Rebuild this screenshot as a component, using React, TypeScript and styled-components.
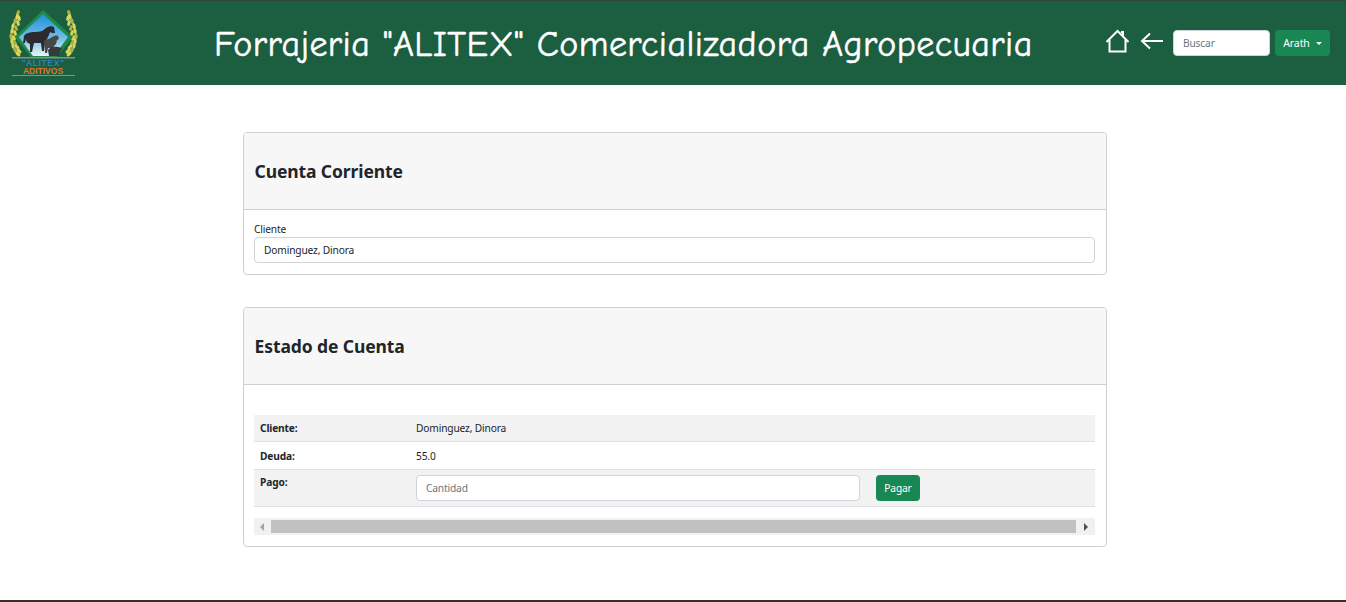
import React from 'react';
import styled, { createGlobalStyle } from 'styled-components';

const GlobalStyle = createGlobalStyle`
  html, body {
    margin: 0;
    padding: 0;
    background: #ffffff;
    overflow: hidden;
  }
  * {
    box-sizing: border-box;
  }
  body {
    font-family: "Noto Sans", "Open Sans", "Liberation Sans", sans-serif;
    color: #212529;
  }
`;

// grain positions along each wheat ear, in screen pixels
const grains = [
  [18, 13, 20], [17, 17, 10], [19, 18, -15], [15, 21, 15], [18, 23, -15], [13, 26, 15], [16, 28, -20],
  [12, 31, 10], [15, 33, -20], [11, 36, 5], [14, 38, -25], [12, 41, 0], [15, 43, -30], [13, 46, -10],
  [17, 47, -40], [15, 50, -25], [19, 51, -50], [18, 54, -45],
];

const Logo = () => (
  <LogoSvg viewBox="8 7 72 72" aria-hidden="true">
    <defs>
      <linearGradient id="sky" x1="0" y1="0" x2="0" y2="1">
        <stop offset="0" stopColor="#1f8fd8" />
        <stop offset="0.55" stopColor="#6dbbe6" />
        <stop offset="1" stopColor="#e8f4f8" />
      </linearGradient>
    </defs>
    {grains.map(([x, y, r], i) => (
      <React.Fragment key={i}>
        <ellipse cx={x} cy={y} rx="1.6" ry="3" transform={`rotate(${r} ${x} ${y})`} fill={i % 3 ? '#dcd75a' : '#a9b548'} />
        <ellipse cx={87 - x} cy={y} rx="1.6" ry="3" transform={`rotate(${-r} ${87 - x} ${y})`} fill={i % 3 ? '#dcd75a' : '#a9b548'} />
      </React.Fragment>
    ))}
    {/* diamond */}
    <path d="M43 10 L73 37 L57 57 H31 L15 37 Z" fill="#1c8a48" />
    <path d="M43 14 L68 37 L54 56 H33 L19 37 Z" fill="url(#sky)" />
    {/* horses */}
    <path d="M24 36c2 -3 6 -4 11 -4 5 0 8 -1 11 -4 3 -2 6 -2 8 -1l1 6 -3 0 -2 -1c-1 3 -2 5 -3 7l-2 4 -1 8h-2l-1 -8h-7l-2 9h-2v-8c-3 -1 -4 -3 -4 -5l-1 4h-2z" fill="#2b2b2f" />
    <path d="M44 41c3 -2 6 -2 8 -4 2 -1 5 -2 6 -1l1 3 -2 1 -1 4 -2 2v7h-2v-5h-4l-1 5h-2v-6z" fill="#46484a" />
    <path d="M48 50c2 -3 6 -4 10 -3l4 1 -2 4 -1 4h-10z" fill="#38393c" />
    {/* labels */}
    <rect x="12" y="57" width="63" height="1.5" fill="#83938a" />
    <LogoName x="43" y="65.5">"ALITEX"</LogoName>
    <LogoSub x="43" y="73.5">ADITIVOS</LogoSub>
    <rect x="12" y="75" width="63" height="1" fill="#83938a" />
  </LogoSvg>
);

const HomeIcon = () => (
  <IconSvg width="24" height="24" viewBox="0 0 24 24">
    <path d="M1.5 13 L12.5 2 L23.5 13" />
    <path d="M4.5 10.5 V22.5 H20.5 V10.5" />
    <path d="M18 7 V3 H16" />
  </IconSvg>
);

const BackIcon = () => (
  <IconSvg width="24" height="24" viewBox="0 0 24 24">
    <path d="M3 12 H24" />
    <path d="M11 4.5 L3 12 L11 19.5" />
  </IconSvg>
);

const App = () => (
  <Page>
    <GlobalStyle />
    <Navbar>
      <Brand>
        <Logo />
      </Brand>
      <Title>Forrajeria "ALITEX" Comercializadora Agropecuaria</Title>
      <NavTools>
        <HomeIcon />
        <BackIcon />
        <SearchInput placeholder="Buscar" readOnly />
        <UserButton>
          Arath
          <Caret />
        </UserButton>
      </NavTools>
    </Navbar>

    <Main>
      <Card>
        <CardHeader>
          <CardTitle>Cuenta Corriente</CardTitle>
        </CardHeader>
        <ClientBody>
          <Label>Cliente</Label>
          <TextInput value="Dominguez, Dinora" readOnly />
        </ClientBody>
      </Card>

      <Card>
        <CardHeader>
          <CardTitle>Estado de Cuenta</CardTitle>
        </CardHeader>
        <AccountBody>
          <AccountTable>
            <Row $striped $height={27}>
              <HeadCell>Cliente:</HeadCell>
              <ValueCell>Dominguez, Dinora</ValueCell>
            </Row>
            <Row $height={28}>
              <HeadCell>Deuda:</HeadCell>
              <ValueCell>55.0</ValueCell>
            </Row>
            <Row $striped $height={37} $top>
              <HeadCell $inset>Pago:</HeadCell>
              <PayCell>
                <PayInput placeholder="Cantidad" readOnly />
                <PayButton>Pagar</PayButton>
              </PayCell>
            </Row>
          </AccountTable>
          <ScrollBar>
            <ScrollArrow $left />
            <ScrollThumb />
            <ScrollArrow />
          </ScrollBar>
        </AccountBody>
      </Card>
    </Main>
    <FooterLine />
  </Page>
);

const Page = styled.div`
  width: 100%;
  height: 602px;
  display: flex;
  flex-direction: column;
`;

const Navbar = styled.header`
  height: 85px;
  flex: none;
  background-color: #1b5e40;
  border-top: 1px solid #33443c;
  display: flex;
  align-items: center;
  padding: 0 16px 0 8px;
`;

const Brand = styled.div`
  width: 72px;
  flex: none;
  display: flex;
`;

const LogoSvg = styled.svg`
  width: 72px;
  height: 72px;
`;

const LogoName = styled.text`
  font-family: "Liberation Sans", sans-serif;
  font-size: 8.5px;
  font-weight: 700;
  letter-spacing: 0.6px;
  fill: #2f7fc0;
  text-anchor: middle;
`;

const LogoSub = styled.text`
  font-family: "Liberation Sans", sans-serif;
  font-size: 8.5px;
  font-weight: 700;
  fill: #dd7a2a;
  text-anchor: middle;
`;

const Title = styled.h1`
  margin: 3px 0 0 134px;
  width: 817px;
  flex: none;
  font-family: "Comic Sans MS", "Comic Neue", "Open Sans", sans-serif;
  font-size: 36px;
  font-weight: 400;
  line-height: 1.2;
  letter-spacing: 0.44px;
  -webkit-text-stroke: 0.5px #ffffff;
  color: #ffffff;
  white-space: nowrap;
`;

const NavTools = styled.div`
  margin-left: auto;
  display: flex;
  align-items: center;
`;

const IconSvg = styled.svg`
  fill: none;
  stroke: #ffffff;
  stroke-width: 2;
  margin-right: 10px;
  margin-top: -4px;
  flex: none;
`;

const SearchInput = styled.input`
  width: 97px;
  height: 26px;
  padding: 0 9px;
  border: 1px solid #ced4da;
  border-radius: 4px;
  background: #ffffff;
  font: inherit;
  font-size: 10.2px;
  letter-spacing: -0.15px;
  outline: none;
  &::placeholder {
    color: #6c757d;
  }
`;

const UserButton = styled.button`
  margin-left: 5px;
  width: 55px;
  height: 26px;
  padding: 0;
  display: flex;
  align-items: center;
  justify-content: center;
  border: 0;
  border-radius: 4px;
  background: #198754;
  color: #ffffff;
  font: inherit;
  font-size: 10.5px;
  letter-spacing: -0.1px;
`;

const Caret = styled.span`
  margin-left: 6px;
  border-top: 3.5px solid #ffffff;
  border-left: 3.5px solid transparent;
  border-right: 3.5px solid transparent;
`;

const Main = styled.main`
  flex: 1;
  width: 864px;
  margin: 47px auto 0 243px;
  display: flex;
  flex-direction: column;
  gap: 32px;
`;

const Card = styled.section`
  border: 1px solid #cfd0d1;
  border-radius: 4px;
  background: #ffffff;
`;

const CardHeader = styled.div`
  height: 77px;
  padding: 0 11px 0 10.5px;
  display: flex;
  align-items: center;
  background: #f7f7f7;
  border-bottom: 1px solid #cfd0d1;
  border-radius: 3px 3px 0 0;
`;

const CardTitle = styled.h2`
  margin: 0;
  font-size: 17.5px;
  font-weight: 700;
  letter-spacing: -0.1px;
  color: #212529;
`;

const ClientBody = styled.div`
  padding: 12px 11px 11px 10px;
`;

const Label = styled.label`
  display: block;
  margin-bottom: 1px;
  font-size: 10.2px;
  letter-spacing: -0.15px;
  line-height: 14px;
`;

const TextInput = styled.input`
  display: block;
  width: 100%;
  height: 26px;
  padding: 0 9px;
  border: 1px solid #ced4da;
  border-radius: 4px;
  background: #ffffff;
  color: #212529;
  font: inherit;
  font-size: 10.2px;
  letter-spacing: -0.15px;
  outline: none;
`;

const AccountBody = styled.div`
  padding: 30px 11px 11px 10px;
`;

const AccountTable = styled.div`
  display: flex;
  flex-direction: column;
`;

const Row = styled.div<{ $striped?: boolean; $height: number; $top?: boolean }>`
  height: ${({ $height }) => $height}px;
  display: flex;
  align-items: ${({ $top }) => ($top ? 'flex-start' : 'center')};
  background: ${({ $striped }) => ($striped ? '#f2f2f2' : '#ffffff')};
  border-bottom: 1px solid #dee2e6;
`;

const HeadCell = styled.div<{ $inset?: boolean }>`
  width: 162px;
  padding-left: 6px;
  padding-top: ${({ $inset }) => ($inset ? '5px' : '0')};
  flex: none;
  font-size: 10.2px;
  font-weight: 700;
  letter-spacing: -0.15px;
  line-height: 14px;
`;

const ValueCell = styled.div`
  font-size: 10.2px;
  letter-spacing: -0.15px;
  line-height: 14px;
`;

const PayCell = styled.div`
  margin-top: 5px;
  display: flex;
  align-items: center;
  gap: 16px;
`;

const PayInput = styled.input`
  width: 444px;
  height: 26px;
  padding: 0 9px;
  border: 1px solid #ced4da;
  border-radius: 4px;
  background: #ffffff;
  font: inherit;
  font-size: 10.2px;
  letter-spacing: -0.15px;
  outline: none;
  &::placeholder {
    color: #6c757d;
  }
`;

const PayButton = styled.button`
  width: 44px;
  height: 26px;
  padding: 0;
  border: 0;
  border-radius: 4px;
  background: #198754;
  color: #ffffff;
  font: inherit;
  font-size: 10.2px;
  letter-spacing: -0.15px;
`;

const ScrollBar = styled.div`
  margin-top: 11px;
  height: 17px;
  display: flex;
  align-items: center;
  background: #f1f1f1;
`;

const ScrollArrow = styled.div<{ $left?: boolean }>`
  width: 17px;
  height: 17px;
  flex: none;
  position: relative;
  &::after {
    content: '';
    position: absolute;
    top: 4.5px;
    left: 6px;
    border-top: 4px solid transparent;
    border-bottom: 4px solid transparent;
    ${({ $left }) =>
      $left ? 'border-right: 4px solid #a3a3a3;' : 'border-left: 4px solid #505050;'}
  }
`;

const ScrollThumb = styled.div`
  flex: 1;
  height: 13px;
  margin-right: 2px;
  background: #c1c1c1;
`;

const FooterLine = styled.div`
  height: 2px;
  flex: none;
  background: #33312a;
`;

export default App;
